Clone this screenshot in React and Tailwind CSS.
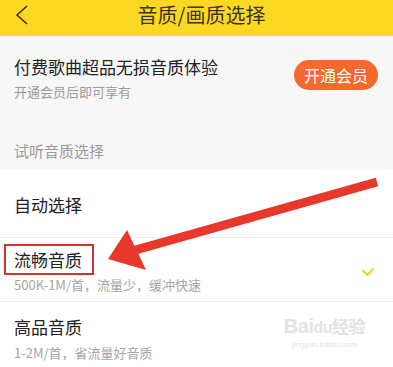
import React from 'react';

const font = { fontFamily: '"Noto Sans CJK SC", "Noto Sans", sans-serif' };

function Check() {
  return (
    <svg width="14" height="10" viewBox="0 0 14 10" className="mr-[18px]">
      <path d="M2 3.5 L6.5 8 L12 2" fill="none" stroke="#e6d63a" strokeWidth="2.2" strokeLinecap="round" strokeLinejoin="round" />
    </svg>
  );
}

function Arrow() {
  return (
    <svg className="absolute inset-0 pointer-events-none" width="393" height="367" viewBox="0 0 393 367">
      <line x1="377" y1="182" x2="132" y2="251" stroke="#e8372b" strokeWidth="9" strokeLinecap="butt" />
      <polygon points="108,259 127,230 146,270" fill="#e8372b" />
    </svg>
  );
}

export default function App() {
  return (
    <div className="relative w-[393px] h-[367px] overflow-hidden bg-white" style={font}>
      <header className="relative h-[36px] bg-[#fcd823] flex items-center justify-center">
        <svg className="absolute left-[14px] top-[4px]" width="15" height="22" viewBox="0 0 15 22">
          <path d="M13 2 L3 11 L13 20" fill="none" stroke="#3a3520" strokeWidth="1.6" />
        </svg>
        <h1 className="text-[20px] leading-[26px] text-[#3a3520] -mt-[7px] ml-[10px]">音质/画质选择</h1>
      </header>

      <section className="bg-[#f7f7f7] pb-[9px]">
        <div className="flex justify-between pt-[19px] pl-[14px] pr-[15px]">
          <div>
            <div className="text-[17px] leading-[24px] text-[#222]">付费歌曲超品无损音质体验</div>
            <div className="mt-[2px] text-[13px] leading-[22px] text-[#9a9a9a]">开通会员后即可享有</div>
          </div>
          <button className="mt-[5px] h-[30px] w-[84px] rounded-full bg-[#f26a2c] text-white text-[16px] leading-[30px]">开通会员</button>
        </div>
        <div className="mt-[38px] pl-[14px] text-[15px] leading-[20px] text-[#9a9a9a]">试听音质选择</div>
      </section>

      <div className="h-[67px] flex items-center pt-[3px] pl-[14px] text-[17px] text-[#222]">自动选择</div>
      <div className="h-px bg-[#ececec]" />

      <div className="relative flex items-center justify-between pl-[14px] pt-[11px] pb-[7px]">
        <div>
          <div className="text-[17px] leading-[22px] text-[#222]">流畅音质</div>
          <div className="mt-[5px] text-[13px] leading-[18px] text-[#a5a5a5]">500K-1M/首，流量少，缓冲快速</div>
        </div>
        <Check />
        <div className="absolute left-[4px] top-[6px] w-[90px] h-[31px] border-2 border-[#d8302e]" />
      </div>
      <div className="h-px bg-[#ececec]" />

      <div className="relative pl-[14px] pt-[14px]">
        <div className="text-[17px] leading-[22px] text-[#222]">高品音质</div>
        <div className="mt-[6px] text-[13px] leading-[18px] text-[#a5a5a5]">1-2M/首，省流量好音质</div>
        <div className="absolute right-[28px] top-[12px] flex flex-col items-center text-[#e3e3e3]">
          <div className="text-[20px] leading-[24px] font-bold tracking-tight" style={{ fontFamily: '"Liberation Sans", sans-serif' }}>Bai<span className="text-[16px]">du</span><span className="text-[17px]" style={font}>经验</span></div>
          <div className="text-[8px] leading-[10px]" style={{ fontFamily: '"Liberation Sans", sans-serif' }}>jingyan.baidu.com</div>
        </div>
      </div>

      <Arrow />
    </div>
  );
}
